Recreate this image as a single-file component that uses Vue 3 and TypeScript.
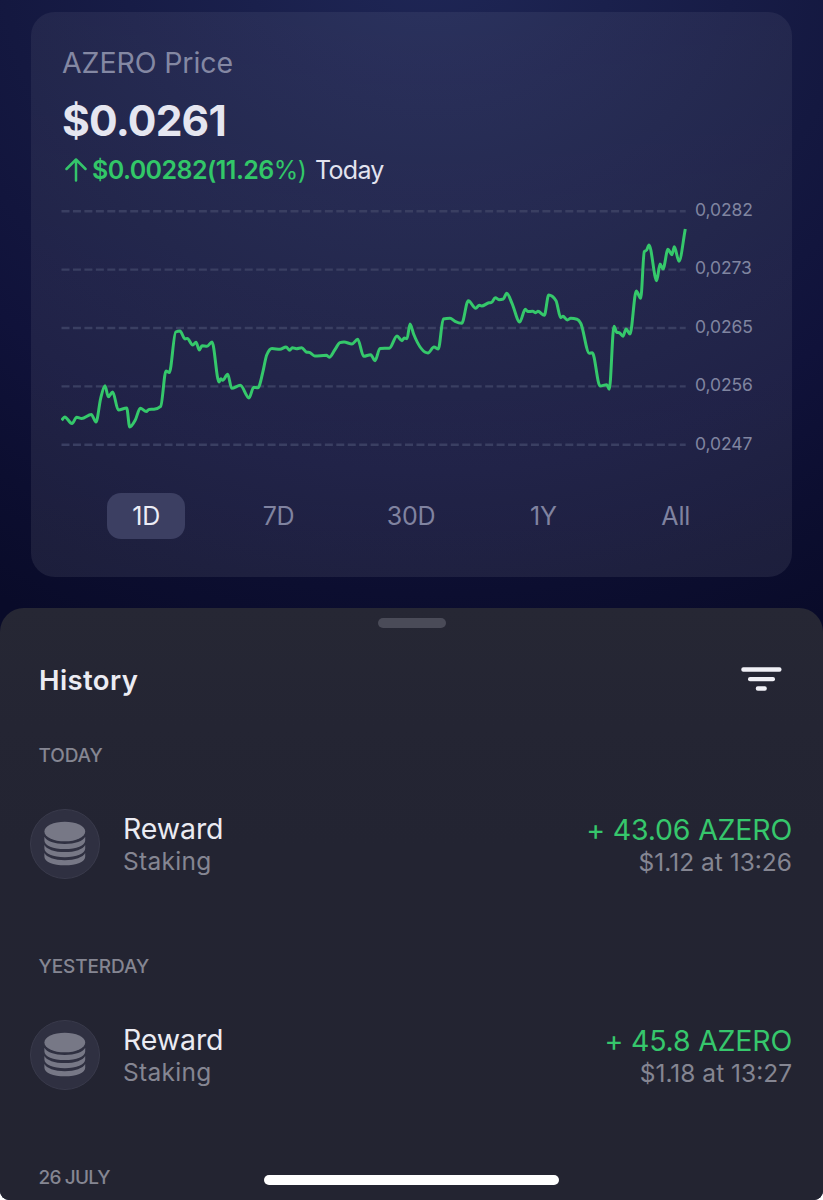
<script setup lang="ts">
type Point = [number, number]

interface Entry {
  day: string
  title: string
  kind: string
  amount: string
  value: string
}

const prices: Point[] = [
  [61.7, 420.3], [64.7, 417], [72, 423.5], [76.7, 417.3], [81.7, 418.5], [91.3, 414.5], [96, 422],
  [100.7, 398.3], [105, 385.7], [108.3, 396.8], [112.7, 392], [118.3, 410], [126.7, 408], [129.7, 427],
  [135.3, 420], [140.3, 408.3], [146.3, 411.5], [149, 409.4], [154, 409.2], [160.7, 406.3], [166, 371],
  [169.3, 372.5], [175.7, 332], [180, 331], [185, 339], [187.3, 338.4], [192.7, 345], [196, 342.3],
  [199.3, 350], [202, 345.8], [207, 346.2], [212, 342], [219, 382], [220.7, 378.8], [222.7, 380.3],
  [227.7, 374.3], [231.7, 388.3], [240.3, 385.3], [249, 398], [253.7, 387.2], [258, 387.7],
  [262.7, 372.7], [266.7, 355], [272, 348.5], [280, 349.3], [286, 347], [289.7, 350.3], [292.3, 347.7],
  [296.3, 348.7], [301.7, 347.7], [306.3, 352], [310, 352.7], [314.7, 356], [326.3, 355.3],
  [329.3, 357.3], [334.7, 350], [340, 342.7], [344, 342], [352, 344], [357.7, 339.3], [363.7, 356.3],
  [370.7, 354.7], [375, 360.7], [380, 348.4], [389.3, 348.2], [397, 336], [402, 340.7], [404.3, 338],
  [407, 338.7], [410, 324], [413.7, 334.3], [428, 353], [434, 347], [438.3, 349], [443.3, 319],
  [450, 318.2], [455, 321.3], [461.7, 323.3], [468.3, 300.7], [475.7, 308.3], [479.3, 305.3],
  [481.7, 306], [489, 302.8], [491.3, 302.6], [495.3, 297.7], [499, 299.7], [503.3, 299],
  [506.7, 293.3], [512, 303.3], [519.7, 322], [525.3, 309.3], [527.7, 311.5], [532.7, 311.3],
  [535.7, 312.7], [538, 311.3], [544.3, 315.3], [548.7, 295], [556, 300.7], [560.7, 317.7],
  [563, 316.3], [567.3, 320], [570.7, 318.3], [577, 319.3], [580.7, 323.3], [589.3, 353.3],
  [592.3, 352.7], [600, 386], [606.7, 384.7], [609.3, 389.3], [614, 326.3], [616.7, 332.3],
  [619.3, 332.7], [623, 336.3], [626, 329], [630, 334], [636.3, 291], [640.7, 298.3], [644.3, 251.7],
  [646.7, 250], [649, 245], [656.7, 280.7], [660, 264], [663, 269], [668, 249.3], [672, 254.7],
  [674.3, 246.7], [679, 261.3], [685.3, 229],
]

// Monotone cubic interpolation keeps every peak at its data point.
function smooth(points: Point[]): string {
  const n = points.length
  const h: number[] = []
  const s: number[] = []
  for (let i = 0; i < n - 1; i++) {
    h.push(points[i + 1][0] - points[i][0])
    s.push((points[i + 1][1] - points[i][1]) / h[i])
  }
  const m: number[] = [s[0]]
  for (let i = 1; i < n - 1; i++) {
    const p = (s[i - 1] * h[i] + s[i] * h[i - 1]) / (h[i - 1] + h[i])
    m.push((Math.sign(s[i - 1]) + Math.sign(s[i])) * Math.min(Math.abs(s[i - 1]), Math.abs(s[i]), 0.5 * Math.abs(p)))
  }
  m.push(s[n - 2])
  let d = `M${points[0][0]} ${points[0][1]}`
  for (let i = 0; i < n - 1; i++) {
    const [x0, y0] = points[i]
    const [x1, y1] = points[i + 1]
    const t = h[i] / 3
    d += `C${(x0 + t).toFixed(2)} ${(y0 + m[i] * t).toFixed(2)} ${(x1 - t).toFixed(2)} ${(y1 - m[i + 1] * t).toFixed(2)} ${x1} ${y1}`
  }
  return d
}

const line = smooth(prices)
const gridLines = [211.3, 269.6, 328, 386.4, 444.7]
const labels = ['0,0282', '0,0273', '0,0265', '0,0256', '0,0247']
const ranges = ['1D', '7D', '30D', '1Y', 'All']
const active = '1D'

const entries: Entry[] = [
  { day: 'TODAY', title: 'Reward', kind: 'Staking', amount: '+ 43.06 AZERO', value: '$1.12 at 13:26' },
  { day: 'YESTERDAY', title: 'Reward', kind: 'Staking', amount: '+ 45.8 AZERO', value: '$1.18 at 13:27' },
]
</script>

<template>
  <main class="screen">
    <section class="card">
      <div class="label">AZERO Price</div>
      <div class="price">$0.0261</div>
      <div class="change">
        <svg class="arrow" width="22" height="26" viewBox="0 0 22 26">
          <path d="M11 23.500V2.500M1.500 12L11 2.500l9.500 9.500" />
        </svg>
        <span class="delta">$0.00282(11.26<span class="unit">%)</span></span>
        <span class="today">Today</span>
      </div>
      <div class="chart">
        <svg width="626" height="260" viewBox="61 200 626 260">
          <line v-for="y in gridLines" :key="y" class="grid" x1="61.5" x2="685.7" :y1="y" :y2="y" />
          <path class="line" :d="line" />
        </svg>
        <div class="axis">
          <span v-for="l in labels" :key="l">{{ l }}</span>
        </div>
      </div>
      <nav class="ranges">
        <div v-for="r in ranges" :key="r" class="range">
          <button type="button" :class="{ active: r === active }">{{ r }}</button>
        </div>
      </nav>
    </section>

    <section class="sheet">
      <div class="handle"></div>
      <header class="head">
        <h2>History</h2>
        <svg width="41" height="25" viewBox="0 0 41 25">
          <rect x="0.300" y="0.300" width="40.200" height="4.500" rx="2" />
          <rect x="7" y="9.900" width="27" height="4.300" rx="2" />
          <rect x="14.800" y="19.200" width="11" height="4.500" rx="2" />
        </svg>
      </header>
      <article v-for="e in entries" :key="e.day" class="entry">
        <h3 class="day">{{ e.day }}</h3>
        <div class="row">
          <svg class="coins" width="70" height="70" viewBox="0 0 70 70">
            <circle cx="35" cy="35" r="34.500" />
            <ellipse cx="34.800" cy="22.500" rx="20.400" ry="9.800" />
            <path
              v-for="i in 3"
              :key="i"
              :transform="`translate(0 ${(i - 1) * 8.100})`"
              d="M14.400 27.800C16.500 32 24.500 35 34.800 35S53.100 32 55.200 27.800V31.500C55.200 36.500 46.500 40.100 34.800 40.100S14.400 36.500 14.400 31.500Z"
            />
          </svg>
          <div class="what">
            <div class="title">{{ e.title }}</div>
            <div class="kind">{{ e.kind }}</div>
          </div>
          <div class="sum">
            <div class="amount">{{ e.amount }}</div>
            <div class="value">{{ e.value }}</div>
          </div>
        </div>
      </article>
      <h3 class="day last">26 JULY</h3>
      <div class="home"></div>
    </section>
  </main>
</template>

<style>
body {
  background: #fff;
}
</style>

<style scoped>
.screen {
  box-sizing: border-box;
  width: 823px;
  height: 1200px;
  padding-top: 12px;
  overflow: hidden;
  border-radius: 0 0 9px 9px;
  font-family: Inter, "Liberation Sans", sans-serif;
  white-space: nowrap;
  background: radial-gradient(ellipse 860px 760px at 430px -60px, #1f2757 0%, #1a204c 22%, #141840 50%, #10123a 70%, #0c0e30 86%, #090b29 100%);
}
.card {
  box-sizing: border-box;
  width: 761px;
  height: 565px;
  margin-left: 31px;
  padding: 31px 31px 0;
  border-radius: 24px;
  background: linear-gradient(#ffffff0f, #ffffff13);
}
.label {
  height: 40px;
  line-height: 40px;
  font-size: 28.500px;
  letter-spacing: -0.100px;
  color: #8488a3;
}
.price {
  height: 56px;
  margin-top: 9.500px;
  line-height: 56px;
  font-size: 42.500px;
  font-weight: 700;
  letter-spacing: -0.800px;
  color: #e5e6f0;
}
.change {
  display: flex;
  align-items: center;
  height: 30px;
  margin-top: 6px;
  line-height: 30px;
  font-size: 25px;
}
.arrow {
  margin: 0 5px 0 3px;
  fill: none;
  stroke: #34c56b;
  stroke-width: 2.500;
  stroke-linecap: round;
  stroke-linejoin: round;
}
.delta {
  width: 223px;
  font-weight: 600;
  letter-spacing: -0.550px;
  color: #32c768;
}
.unit {
  font-weight: 400;
}
.today {
  letter-spacing: -0.700px;
  color: #e2e3ef;
}
.chart {
  display: flex;
  height: 260px;
  margin: 15.500px 0 0 -1px;
}
.grid {
  stroke: #3a3f62;
  stroke-width: 2.400;
  stroke-dasharray: 8 3.450;
}
.line {
  fill: none;
  stroke: #35c86b;
  stroke-width: 3;
  stroke-linejoin: round;
}
.axis {
  display: flex;
  flex-direction: column;
  margin-left: 8px;
  margin-top: -19px;
}
.axis span {
  height: 58.400px;
  line-height: 58.400px;
  font-size: 17.500px;
  letter-spacing: -0.100px;
  color: #8085a0;
}
.ranges {
  display: grid;
  grid-template-columns: repeat(5, 132.400px);
  margin: 33px 0 0 18px;
}
.range {
  display: flex;
  justify-content: center;
}
.range button {
  width: 78px;
  height: 46px;
  padding: 0;
  border: 0;
  border-radius: 14px;
  background: transparent;
  font: 25px/46px Inter, "Liberation Sans", sans-serif;
  letter-spacing: -0.200px;
  color: #8083a0;
}
.range .active {
  background: #3c3f62;
  color: #ecedf6;
}
.sheet {
  position: relative;
  box-sizing: border-box;
  height: 592px;
  margin-top: 31px;
  padding: 9.500px 31px 0;
  border-radius: 24px 24px 0 0;
  background: linear-gradient(#262734, #242533 20%, #232432 40%, #232431);
}
.handle {
  width: 68px;
  height: 10px;
  margin: 0 auto;
  border-radius: 5px;
  background: #4a4b58;
}
.head {
  display: flex;
  justify-content: space-between;
  align-items: center;
  height: 40px;
  margin: 32px 10px 0 8px;
}
.head h2 {
  margin: 0;
  font-size: 27.500px;
  line-height: 40px;
  font-weight: 600;
  letter-spacing: 0.400px;
  color: #ececf3;
}
.head svg {
  margin-top: -1px;
  fill: #f0f0f6;
}
.entry {
  height: 211.300px;
}
.day {
  height: 30px;
  margin: 0 0 0 7.500px;
  line-height: 30px;
  font-size: 19px;
  font-weight: 500;
  letter-spacing: -0.100px;
  color: #858692;
}
.day.last {
  letter-spacing: -0.800px;
}
.head + .entry {
  margin-top: 41px;
}
.row {
  display: flex;
  height: 70px;
  margin-top: 38px;
}
.coins {
  margin-left: -1px;
  fill: #777886;
}
.coins circle {
  fill: #2f3041;
  stroke: #3a3b4c;
}
.what {
  margin: 1px 0 0 23px;
}
.title,
.amount {
  height: 37px;
  line-height: 38px;
  font-size: 28.500px;
}
.title {
  letter-spacing: -0.100px;
  color: #ebebf2;
}
.kind,
.value {
  height: 28px;
  line-height: 28px;
  font-size: 24.500px;
  color: #858692;
}
.kind {
  letter-spacing: 0.300px;
}
.sum {
  margin-left: auto;
  margin-top: 2px;
  text-align: right;
}
.amount {
  letter-spacing: -0.200px;
  color: #36c76c;
}
.home {
  position: absolute;
  left: 264px;
  bottom: 15px;
  width: 295px;
  height: 10px;
  border-radius: 5px;
  background: #fff;
}
</style>
